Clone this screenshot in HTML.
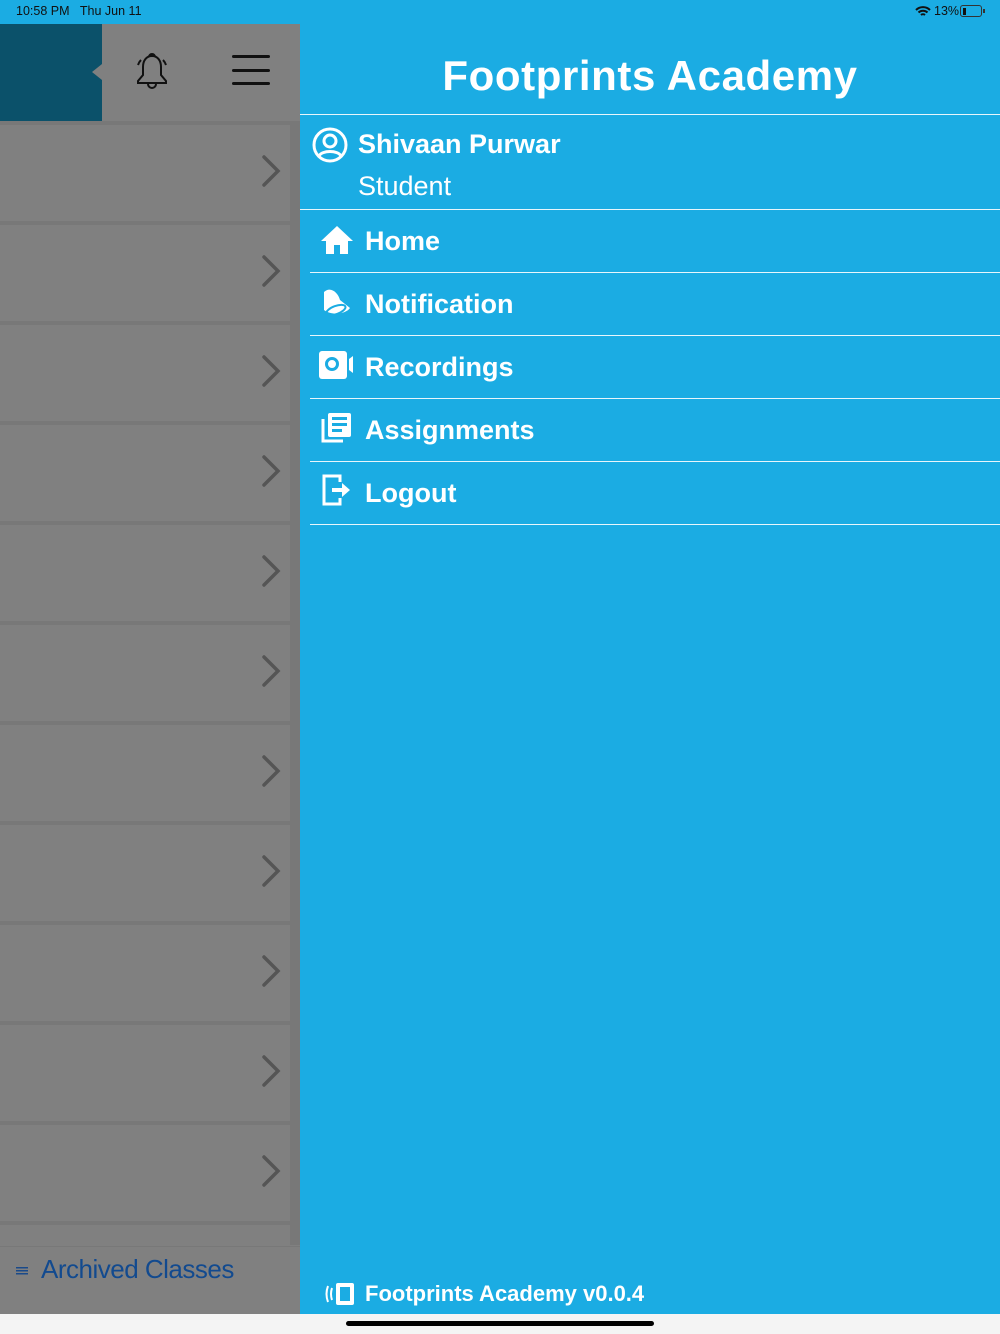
<!DOCTYPE html>
<html><head><style>
*{margin:0;padding:0;box-sizing:border-box}
body{width:1000px;height:1334px;position:relative;overflow:hidden;background:#1bace3;font-family:"Liberation Sans",sans-serif}
.abs{position:absolute}
.left{left:0;top:24px;width:300px;height:1290px;background:#808080}
.row{position:absolute;left:0;width:290px;height:96px;background:#808080}
.sep{position:absolute;left:0;width:300px;height:4px;background:#787878}
.menu{position:absolute;left:365px;color:#fff;font-weight:bold;font-size:27px}
.line{position:absolute;height:1px;background:#e8f6fc;right:0}
</style></head><body>
<div class="abs" style="left:0;top:0;width:1000px;height:24px;background:#1bace3"></div>
<div class="abs" style="left:16px;top:4px;font-size:12.5px;color:#111">10:58 PM&nbsp;&nbsp;&nbsp;Thu Jun 11</div>
<svg class="abs" style="left:915px;top:5px" width="16" height="13" viewBox="0 0 16 13"><path d="M1 5a10 10 0 0 1 14 0M3.5 7.5a6.5 6.5 0 0 1 9 0M6 10a3 3 0 0 1 4 0" stroke="#111" stroke-width="2" fill="none"/></svg>
<div class="abs" style="left:934px;top:4px;font-size:12.5px;color:#111">13%</div>
<div class="abs" style="left:960px;top:5px;width:22px;height:12px;border:1px solid #333;border-radius:3px"><div style="margin:1.5px;width:3px;height:7px;background:#111"></div></div>
<div class="abs" style="left:983px;top:9px;width:2px;height:4px;background:#333"></div>

<div class="abs left"></div>
<div class="abs" style="left:0;top:24px;width:102px;height:97px;background:#0b516a"></div>
<div class="abs" style="left:92px;top:64px;width:0;height:0;border-top:8px solid transparent;border-bottom:8px solid transparent;border-right:10px solid #808080"></div>
<svg class="abs" style="left:134px;top:53px" width="36" height="38" viewBox="0 0 36 38"><path d="M18 3c-6 0-9 5-9 11v8l-5 6v2h28v-2l-5-6v-8c0-6-3-11-9-11z M14 31a4 4 0 0 0 8 0 M15 4a3 3 0 0 1 6 0 M7 7q-2 2-3 5 M29 7q2 2 3 5" stroke="#111" stroke-width="2" fill="none"/></svg>
<div class="abs" style="left:232px;top:55px;width:38px;height:3px;background:#111;border-radius:2px"></div>
<div class="abs" style="left:232px;top:69px;width:38px;height:3px;background:#111;border-radius:2px"></div>
<div class="abs" style="left:232px;top:82px;width:38px;height:3px;background:#111;border-radius:2px"></div>
<div class="abs" style="left:0;top:121px;width:300px;height:4px;background:#787878"></div>
<div class="abs" style="left:290px;top:125px;width:10px;height:1120px;background:#787878"></div>

<div class="row" style="top:125px"></div><div class="sep" style="top:221px"></div>
<div class="row" style="top:225px"></div><div class="sep" style="top:321px"></div>
<div class="row" style="top:325px"></div><div class="sep" style="top:421px"></div>
<div class="row" style="top:425px"></div><div class="sep" style="top:521px"></div>
<div class="row" style="top:525px"></div><div class="sep" style="top:621px"></div>
<div class="row" style="top:625px"></div><div class="sep" style="top:721px"></div>
<div class="row" style="top:725px"></div><div class="sep" style="top:821px"></div>
<div class="row" style="top:825px"></div><div class="sep" style="top:921px"></div>
<div class="row" style="top:925px"></div><div class="sep" style="top:1021px"></div>
<div class="row" style="top:1025px"></div><div class="sep" style="top:1121px"></div>
<div class="row" style="top:1125px"></div><div class="sep" style="top:1221px"></div>
<div class="abs" style="left:0;top:1246px;width:300px;height:1px;background:#787878"></div>

<svg class="abs" style="left:0;top:0" width="300" height="1334">
<g stroke="#555" stroke-width="3.5" fill="none" stroke-linecap="round">
<path d="M264 157l14 14-14 14"/><path d="M264 257l14 14-14 14"/><path d="M264 357l14 14-14 14"/><path d="M264 457l14 14-14 14"/><path d="M264 557l14 14-14 14"/><path d="M264 657l14 14-14 14"/><path d="M264 757l14 14-14 14"/><path d="M264 857l14 14-14 14"/><path d="M264 957l14 14-14 14"/><path d="M264 1057l14 14-14 14"/><path d="M264 1157l14 14-14 14"/>
</g>
<g fill="#1a4a8a"><rect x="16" y="1267" width="12" height="1.5"/><rect x="16" y="1270" width="12" height="1.5"/><rect x="16" y="1273" width="12" height="1.5"/></g>
</svg>
<div class="abs" style="left:41px;top:1254px;font-size:26px;color:#124a8f;letter-spacing:-0.5px">Archived Classes</div>

<div class="abs" style="left:300px;top:52px;width:700px;text-align:center;color:#fff;font-weight:bold;font-size:42px;letter-spacing:0.6px">Footprints Academy</div>
<div class="line" style="left:300px;top:114px"></div>
<svg class="abs" style="left:312px;top:127px" width="36" height="36" viewBox="0 0 36 36"><circle cx="18" cy="18" r="16" stroke="#fff" stroke-width="3" fill="none"/><circle cx="18" cy="14" r="6" stroke="#fff" stroke-width="3" fill="none"/><path d="M7 29c3-6 19-6 22 0" stroke="#fff" stroke-width="3" fill="none"/></svg>
<div class="abs" style="left:358px;top:129px;color:#fff;font-weight:bold;font-size:27px">Shivaan Purwar</div>
<div class="abs" style="left:358px;top:171px;color:#fff;font-size:27px">Student</div>
<div class="line" style="left:300px;top:209px"></div>

<svg class="abs" style="left:320px;top:225px" width="34" height="30" viewBox="0 0 34 30"><path d="M17 1L1 16h5v13h8v-9h6v9h8V16h5z" fill="#fff"/></svg>
<div class="menu" style="top:226px">Home</div>
<div class="line" style="left:310px;top:272px"></div>
<svg class="abs" style="left:320px;top:286px" width="32" height="32" viewBox="0 0 32 32"><path d="M4 6c6-6 14 0 16 8l10 8c-4 6-18 8-26 2z" fill="#fff"/><ellipse cx="16" cy="24" rx="10" ry="4" transform="rotate(-20 16 24)" stroke="#1bace3" stroke-width="2" fill="none"/></svg>
<div class="menu" style="top:289px">Notification</div>
<div class="line" style="left:310px;top:335px"></div>
<svg class="abs" style="left:319px;top:350px" width="36" height="30" viewBox="0 0 36 30"><rect x="0" y="1" width="28" height="28" rx="3" fill="#fff"/><circle cx="13" cy="14" r="5.5" stroke="#1bace3" stroke-width="3" fill="none"/><path d="M30 9l4-3v17l-4-3z" fill="#fff"/></svg>
<div class="menu" style="top:352px">Recordings</div>
<div class="line" style="left:310px;top:398px"></div>
<svg class="abs" style="left:321px;top:411px" width="32" height="32" viewBox="0 0 32 32"><path d="M2 8v22h20" stroke="#fff" stroke-width="3" fill="none"/><rect x="7" y="2" width="23" height="24" rx="2" fill="#fff"/><g fill="#1bace3"><rect x="11" y="6" width="15" height="3"/><rect x="11" y="12" width="15" height="3"/><rect x="11" y="18" width="10" height="3"/></g></svg>
<div class="menu" style="top:415px">Assignments</div>
<div class="line" style="left:310px;top:461px"></div>
<svg class="abs" style="left:322px;top:474px" width="30" height="32" viewBox="0 0 30 32"><path d="M18 8V2H2v28h16v-6" stroke="#fff" stroke-width="3" fill="none"/><path d="M10 14h10v-5l8 7-8 7v-5H10z" fill="#fff"/></svg>
<div class="menu" style="top:478px">Logout</div>
<div class="line" style="left:310px;top:524px"></div>

<svg class="abs" style="left:323px;top:1282px" width="34" height="24" viewBox="0 0 34 24"><path d="M5 4q-3 8 0 16M9 6q-2 6 0 12" stroke="#fff" stroke-width="2" fill="none"/><rect x="13" y="1" width="18" height="22" rx="2" fill="#fff"/><rect x="17" y="5" width="10" height="14" fill="#1bace3"/></svg>
<div class="abs" style="left:365px;top:1281px;color:#fff;font-weight:bold;font-size:22px">Footprints Academy v0.0.4</div>

<div class="abs" style="left:0;top:1314px;width:1000px;height:20px;background:#f4f4f4"></div>
<div class="abs" style="left:346px;top:1321px;width:308px;height:5px;background:#000;border-radius:3px"></div>
</body></html>
